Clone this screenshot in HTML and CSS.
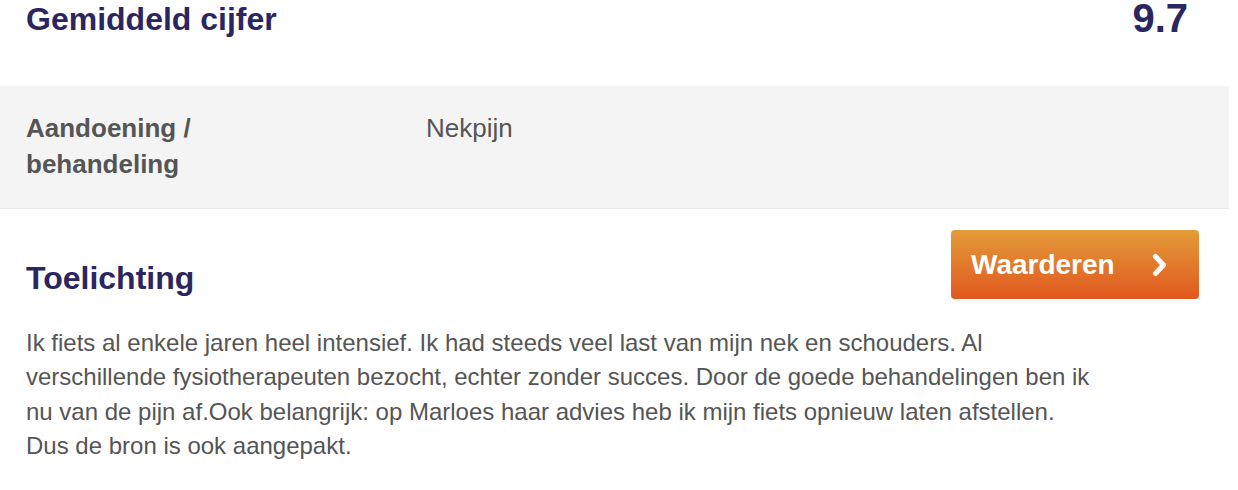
FILE: index.html
```html
<!DOCTYPE html>
<html lang="nl">
<head>
  <meta charset="UTF-8">
  <meta name="viewport" content="width=device-width, initial-scale=1.0">
  <title>Waardering</title>
  <link rel="stylesheet" href="styles.css">
</head>
<body>
  <div class="review">
    <div class="score-row">
      <h2 class="score-title">Gemiddeld cijfer</h2>
      <span class="score-value">9.7</span>
    </div>

    <div class="info-row">
      <div class="info-label">Aandoening /<br>behandeling</div>
      <div class="info-value">Nekpijn</div>
    </div>

    <div class="comment">
      <div class="comment-head">
        <h2 class="comment-title">Toelichting</h2>
        <a href="#" class="rate-button">
          Waarderen
          <svg class="chevron" width="15" height="24" viewBox="0 0 15 24">
            <polyline points="3.5,3.5 11.5,12 3.5,20.5" fill="none" stroke="#fff" stroke-width="5" stroke-linecap="round" stroke-linejoin="round"/>
          </svg>
        </a>
      </div>
      <p class="comment-text">Ik fiets al enkele jaren heel intensief. Ik had steeds veel last van mijn nek en schouders. Al verschillende fysiotherapeuten bezocht, echter zonder succes. Door de goede behandelingen ben ik nu van de pijn af.Ook belangrijk: op Marloes haar advies heb ik mijn fiets opnieuw laten afstellen. Dus de bron is ook aangepakt.</p>
    </div>
  </div>
</body>
</html>
```

FILE: styles.css
```css
body {
  margin: 0;
  font-family: "Liberation Sans", Arial, sans-serif;
  background: #fff;
}
.review {
  width: 1229px;
}
.score-row {
  display: flex;
  justify-content: space-between;
  align-items: flex-start;
  box-sizing: border-box;
  height: 86px;
  padding: 1px 41px 0 26px;
}
.score-title {
  margin: 0;
  font-size: 32px;
  font-weight: bold;
  color: #2c2660;
}
.score-value {
  font-size: 40px;
  font-weight: bold;
  line-height: 34px;
  color: #2c2660;
}
.info-row {
  display: flex;
  background: #f4f4f4;
  border-bottom: 1px solid #e8e8e8;
  padding: 24px 26px 26px;
  font-size: 26px;
  line-height: 36px;
  color: #555;
}
.info-label {
  width: 400px;
  font-weight: bold;
}
.comment {
  padding: 21px 30px 0 26px;
}
.comment-head {
  display: flex;
  justify-content: space-between;
  align-items: flex-end;
}
.comment-title {
  margin: 0 0 2px;
  font-size: 32px;
  font-weight: bold;
  color: #2c2660;
}
.rate-button {
  display: flex;
  align-items: center;
  justify-content: space-between;
  box-sizing: border-box;
  width: 248px;
  height: 69px;
  padding: 0 32px 0 20px;
  border-radius: 4px;
  background: linear-gradient(#e49c39, #e0571e);
  color: #fff;
  font-size: 28px;
  font-weight: bold;
  text-decoration: none;
}
.chevron {
  display: block;
}
.comment-text {
  max-width: 1074px;
  margin: 27px 0 0;
  font-size: 24px;
  line-height: 34.33px;
  color: #555;
}
```
